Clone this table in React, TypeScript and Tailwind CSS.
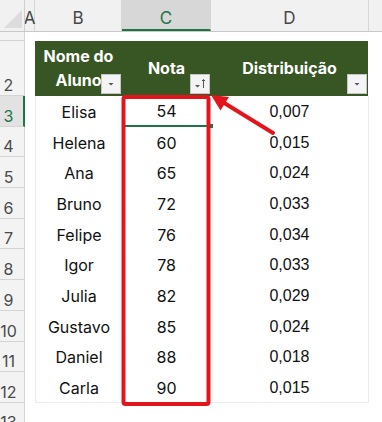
const alunos = [
  { nome: "Elisa", nota: 54, dist: "0,007" },
  { nome: "Helena", nota: 60, dist: "0,015" },
  { nome: "Ana", nota: 65, dist: "0,024" },
  { nome: "Bruno", nota: 72, dist: "0,033" },
  { nome: "Felipe", nota: 76, dist: "0,034" },
  { nome: "Igor", nota: 78, dist: "0,033" },
  { nome: "Julia", nota: 82, dist: "0,029" },
  { nome: "Gustavo", nota: 85, dist: "0,024" },
  { nome: "Daniel", nota: 88, dist: "0,018" },
  { nome: "Carla", nota: 90, dist: "0,015" },
];

function FilterButton({ sorted }: { sorted?: boolean }) {
  return (
    <div className="absolute bottom-[2px] right-[1px] flex h-[20px] w-[20px] items-center justify-center border border-[#c6c6c6] bg-[#f4f4f4]">
      <svg width="18" height="18" viewBox="0 0 18 18">
        {sorted ? (
          <>
            <path d="M4 10 L9 10 L6.5 12.5 Z" fill="#555" />
            <path d="M12.5 13 L12.5 4.5 M11 6 L12.5 4.5 L14 6" stroke="#555" strokeWidth="1" fill="none" />
          </>
        ) : (
          <path d="M6.5 8 L11.5 8 L9 10.5 Z" fill="#555" />
        )}
      </svg>
    </div>
  );
}

function RowHead({ n, selected, className }: { n?: number; selected?: boolean; className?: string }) {
  return (
    <div
      className={`flex w-[25px] shrink-0 items-end border-b border-r border-[#d4d4d4] pb-[2px] text-[16px] ${
        selected ? "border-r-2 border-r-[#217346] bg-[#e2e2e2] text-[#217346]" : "bg-[#f3f3f3] text-[#4a4a4a]"
      } ${className ?? ""}`}
    >
      <div className="flex w-[17px] justify-center leading-none whitespace-nowrap">{n}</div>
    </div>
  );
}

export default function App() {
  return (
    <div className="relative h-[422px] w-[382px] overflow-hidden bg-white font-['Inter',sans-serif]">
      {/* column letters */}
      <div className="flex h-[32px] border-b border-[#c8c8c8] bg-[#f1f1f1] text-[17px] text-[#474747]">
        <div className="relative w-[25px] shrink-0 border-r border-[#cfcfcf]">
          <svg className="absolute bottom-[3px] right-[2px]" width="18" height="18" viewBox="0 0 18 18">
            <path d="M18 0 L18 18 L0 18 Z" fill="#dcdcdc" />
          </svg>
        </div>
        <div className="flex w-[10px] shrink-0 items-center justify-center border-r border-[#d6d6d6] pt-[6px]">A</div>
        <div className="flex w-[87px] shrink-0 items-center justify-center border-r border-[#d6d6d6] pt-[6px]">B</div>
        <div className="flex w-[89px] shrink-0 items-center justify-center border-b-2 border-r border-b-[#217346] border-r-[#d6d6d6] bg-[#d7d7d7] pt-[8px] text-[#217346]">
          C
        </div>
        <div className="flex w-[158px] shrink-0 items-center justify-center border-r border-[#d6d6d6] pt-[6px]">D</div>
        <div className="flex-1" />
      </div>

      {/* row 1 */}
      <div className="flex h-[9px]">
        <RowHead className="items-start pb-0" />
        <div className="flex-1" />
      </div>

      {/* row 2: table header */}
      <div className="flex h-[55px]">
        <RowHead n={2} />
        <div className="w-[10px] shrink-0" />
        <div className="flex w-[333px] shrink-0 bg-[#375623] text-[16px] font-bold leading-[24px] text-white">
          <div className="relative flex w-[87px] items-center justify-center text-center">
            <span className="-mt-[1px]">
              Nome do
              <br />
              Aluno
            </span>
            <FilterButton />
          </div>
          <div className="relative flex w-[89px] items-center justify-center">
            <span className="-mt-[1px]">Nota</span>
            <FilterButton sorted />
          </div>
          <div className="relative flex flex-1 items-center justify-center">
            <span className="-mt-[1px]">Distribuição</span>
            <FilterButton />
          </div>
        </div>
      </div>

      {/* data rows */}
      {alunos.map((a, i) => (
        <div key={a.nome} className="flex h-[30.7px]">
          <RowHead n={i + 3} selected={i === 0} />
          <div className="w-[10px] shrink-0" />
          <div
            className={`flex w-[334px] shrink-0 border-x border-[#ececec] text-[16px] text-[#111] ${
              i === alunos.length - 1 ? "border-b" : ""
            }`}
          >
            <div className="flex w-[86px] items-center justify-center pt-[1px]">{a.nome}</div>
            <div
              className={`relative flex w-[89px] items-center justify-center pt-[1px] ${
                i === 0 ? "border-b-2 border-[#217346]" : ""
              }`}
            >
              {a.nota}
              {i === 0 && <div className="absolute -bottom-[4px] -right-[3px] h-[6px] w-[6px] border border-white bg-[#217346]" />}
            </div>
            <div className="flex flex-1 items-center justify-center pt-[1px] font-['Liberation_Sans',sans-serif] text-[16px]">
              {a.dist}
            </div>
          </div>
        </div>
      ))}

      {/* row 13 */}
      <div className="flex h-[30px]">
        <RowHead n={13} />
        <div className="flex-1" />
      </div>

      {/* annotation */}
      <svg className="pointer-events-none absolute left-0 top-0" width="382" height="422" viewBox="0 0 382 422">
        <rect x="123.5" y="97" width="85" height="307" rx="2" fill="none" stroke="#e3141c" strokeWidth="4" />
        <line x1="273" y1="133" x2="221" y2="101" stroke="#e3141c" strokeWidth="4" strokeLinecap="round" />
        <path d="M211 95 L229 97 L220.5 110.5 Z" fill="#e3141c" />
      </svg>
    </div>
  );
}
